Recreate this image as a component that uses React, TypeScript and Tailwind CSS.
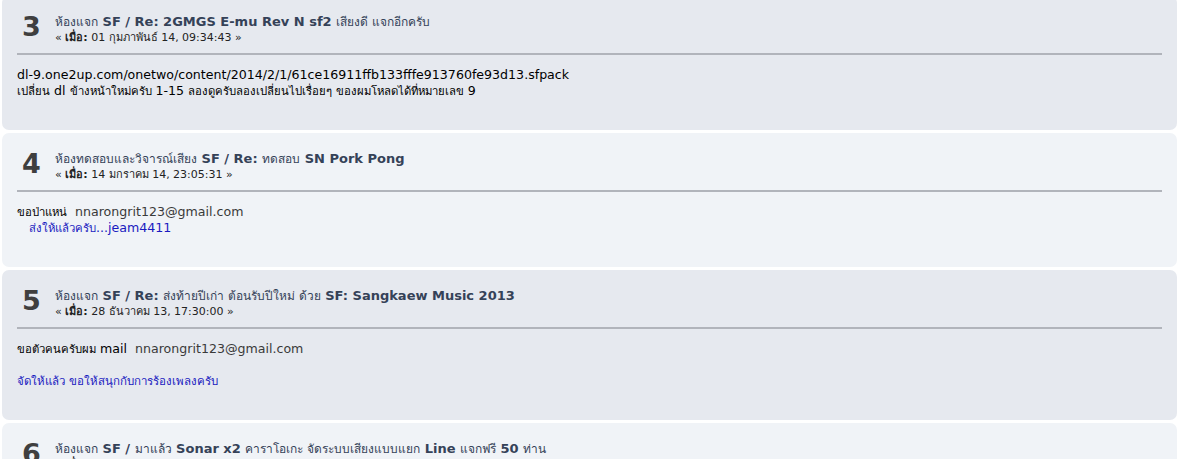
import type { ReactNode } from "react";

type Post = {
  n: number;
  title: ReactNode;
  date: string;
  body: ReactNode;
  tone: "a" | "b";
};

// Thai runs fall back to a wider face than the forum's Tahoma, so shrink them a bit
const TH = ({ children }: { children: ReactNode }) => (
  <span className="text-[0.92em] font-normal">{children}</span>
);
const T = ({ children }: { children: ReactNode }) => (
  <span className="text-[0.9em]">{children}</span>
);

const POSTS: Post[] = [
  {
    n: 3,
    tone: "a",
    title: (
      <>
        <TH>ห้องแจก</TH> SF / Re: 2GMGS E-mu Rev N sf2 <TH>เสียงดี แจกอีกครับ</TH>
      </>
    ),
    date: "01 กุมภาพันธ์ 14, 09:34:43",
    body: (
      <>
        <div>dl-9.one2up.com/onetwo/content/2014/2/1/61ce16911ffb133fffe913760fe93d13.sfpack</div>
        <div>
          <T>เปลี่ยน</T> dl <T>ข้างหน้าใหม่ครับ</T> 1-15 <T>ลองดูครับลองเปลี่ยนไปเรื่อยๆ ของผมโหลดได้ที่หมายเลข</T> 9
        </div>
      </>
    ),
  },
  {
    n: 4,
    tone: "b",
    title: (
      <>
        <TH>ห้องทดสอบและวิจารณ์เสียง</TH> SF / Re: <TH>ทดสอบ</TH> SN Pork Pong
      </>
    ),
    date: "14 มกราคม 14, 23:05:31",
    body: (
      <>
        <div>
          <T>ขอป่าแหน่</T> <span className="text-[#3a3a3a]">&nbsp;nnarongrit123@gmail.com</span>
        </div>
        <div className="pl-[12px] text-[#1a1ac0]">
          <T>ส่งให้แล้วครับ</T>...jeam4411
        </div>
      </>
    ),
  },
  {
    n: 5,
    tone: "a",
    title: (
      <>
        <TH>ห้องแจก</TH> SF / Re: <TH>ส่งท้ายปีเก่า ต้อนรับปีใหม่ ด้วย</TH> SF: Sangkaew Music 2013
      </>
    ),
    date: "28 ธันวาคม 13, 17:30:00",
    body: (
      <>
        <div>
          <T>ขอตัวคนครับผม</T> mail <span className="text-[#3a3a3a]">&nbsp;nnarongrit123@gmail.com</span>
        </div>
        <div>&nbsp;</div>
        <div className="text-[11.5px] text-[#1a1ac0]">จัดให้แล้ว ขอให้สนุกกับการร้องเพลงครับ</div>
      </>
    ),
  },
  {
    n: 6,
    tone: "b",
    title: (
      <>
        <TH>ห้องแจก</TH> SF / <TH>มาแล้ว</TH> Sonar x2 <TH>คาราโอเกะ จัดระบบเสียงแบบแยก</TH> Line{" "}
        <TH>แจกฟรี</TH> 50 <TH>ท่าน</TH>
      </>
    ),
    date: "25 ธันวาคม 13, 20:12:44",
    body: <div>&nbsp;</div>,
  },
];

function PostCard({ post }: { post: Post }) {
  return (
    <div
      className={`rounded-[7px] px-[15px] pb-[31px] ${
        post.tone === "a" ? "bg-[#e6e9ef]" : "bg-[#f0f3f7]"
      }`}
    >
      <div className="flex h-[57px] items-start pt-[17px]">
        <div className="ml-[5px] w-[33px] shrink-0 text-[27px] font-bold leading-[27px] text-[#3f3f3f]">
          {post.n}
        </div>
        <div className="mt-[1px] min-w-0">
          <div className="text-[13px] font-bold leading-[16px] text-[#354258]">{post.title}</div>
          <div className="text-[11px] leading-[15px] text-[#222]">
            « <b>เมื่อ:</b> {post.date} »
          </div>
        </div>
      </div>
      <div className="border-t-2 border-[#b1b4bb] pt-[12px] text-[12.6px] leading-[16px] text-black">
        {post.body}
      </div>
    </div>
  );
}

export default function App() {
  return (
    <div
      className="h-[459px] overflow-hidden bg-white pl-[2px] pr-[15px]"
      style={{ fontFamily: '"DejaVu Sans", "Noto Sans", sans-serif' }}
    >
      <div className="-mt-[4px] flex flex-col gap-[3px]">
        {POSTS.map((p) => (
          <PostCard key={p.n} post={p} />
        ))}
      </div>
    </div>
  );
}
